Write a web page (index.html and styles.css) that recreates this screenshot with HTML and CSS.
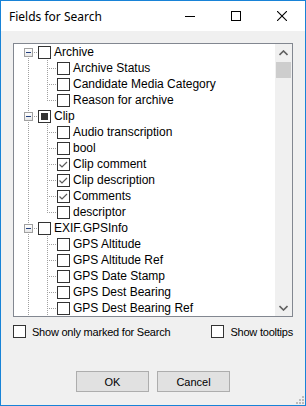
FILE: index.html
```html
<!DOCTYPE html>
<html>
	<head>
		<meta charset="utf-8">
        <title>Fields for Search</title>
        <link rel="stylesheet" href="styles.css">
	</head>
	<body>
    <div class="window">
        <div class="titlebar">
            <span class="title">Fields for Search</span>
            <span class="capbtn"><svg width="10" height="10"><rect x="0" y="5" width="10" height="1" fill="#000"/></svg></span>
            <span class="capbtn"><svg width="10" height="10"><rect x="0.5" y="0.5" width="9" height="9" fill="none" stroke="#000"/></svg></span>
            <span class="capbtn"><svg width="10" height="10"><path d="M0 0 L10 10 M10 0 L0 10" stroke="#000" stroke-width="1.1"/></svg></span>
        </div>

        <div class="client">
            <div class="treebox">
                <div class="tree">
                    <div class="row"><span class="node root first"><i class="exp"></i></span><span class="dash"></span><span class="cb"></span><span class="lbl">Archive</span></div>
                    <div class="row"><span class="guide"></span><span class="node"></span><span class="dash"></span><span class="cb"></span><span class="lbl">Archive Status</span></div>
                    <div class="row"><span class="guide"></span><span class="node"></span><span class="dash"></span><span class="cb"></span><span class="lbl">Candidate Media Category</span></div>
                    <div class="row"><span class="guide"></span><span class="node last"></span><span class="dash"></span><span class="cb"></span><span class="lbl">Reason for archive</span></div>

                    <div class="row"><span class="node root"><i class="exp"></i></span><span class="dash"></span><span class="cb part"></span><span class="lbl">Clip</span></div>
                    <div class="row"><span class="guide"></span><span class="node"></span><span class="dash"></span><span class="cb"></span><span class="lbl">Audio transcription</span></div>
                    <div class="row"><span class="guide"></span><span class="node"></span><span class="dash"></span><span class="cb"></span><span class="lbl">bool</span></div>
                    <div class="row"><span class="guide"></span><span class="node"></span><span class="dash"></span><span class="cb on"><svg width="11" height="11"><path d="M1.5 5.5 L4 8 L9 3" fill="none" stroke="#5a5a5a" stroke-width="1.2"/></svg></span><span class="lbl">Clip comment</span></div>
                    <div class="row"><span class="guide"></span><span class="node"></span><span class="dash"></span><span class="cb on"><svg width="11" height="11"><path d="M1.5 5.5 L4 8 L9 3" fill="none" stroke="#5a5a5a" stroke-width="1.2"/></svg></span><span class="lbl">Clip description</span></div>
                    <div class="row"><span class="guide"></span><span class="node"></span><span class="dash"></span><span class="cb on"><svg width="11" height="11"><path d="M1.5 5.5 L4 8 L9 3" fill="none" stroke="#5a5a5a" stroke-width="1.2"/></svg></span><span class="lbl">Comments</span></div>
                    <div class="row"><span class="guide"></span><span class="node last"></span><span class="dash"></span><span class="cb"></span><span class="lbl">descriptor</span></div>

                    <div class="row"><span class="node root"><i class="exp"></i></span><span class="dash"></span><span class="cb"></span><span class="lbl">EXIF.GPSInfo</span></div>
                    <div class="row"><span class="guide"></span><span class="node"></span><span class="dash"></span><span class="cb"></span><span class="lbl">GPS Altitude</span></div>
                    <div class="row"><span class="guide"></span><span class="node"></span><span class="dash"></span><span class="cb"></span><span class="lbl">GPS Altitude Ref</span></div>
                    <div class="row"><span class="guide"></span><span class="node"></span><span class="dash"></span><span class="cb"></span><span class="lbl">GPS Date Stamp</span></div>
                    <div class="row"><span class="guide"></span><span class="node"></span><span class="dash"></span><span class="cb"></span><span class="lbl">GPS Dest Bearing</span></div>
                    <div class="row"><span class="guide"></span><span class="node"></span><span class="dash"></span><span class="cb"></span><span class="lbl">GPS Dest Bearing Ref</span></div>
                </div>
                <div class="vscroll">
                    <span class="arrow"><svg width="9" height="6"><path d="M0.5 5 L4.5 1 L8.5 5" fill="none" stroke="#606060" stroke-width="1.6"/></svg></span>
                    <span class="thumb"></span>
                    <span class="track"></span>
                    <span class="arrow"><svg width="9" height="6"><path d="M0.5 1 L4.5 5 L8.5 1" fill="none" stroke="#606060" stroke-width="1.6"/></svg></span>
                </div>
            </div>

            <div class="opts">
                <label class="opt"><span class="cb"></span>Show only marked for Search</label>
                <label class="opt"><span class="cb"></span>Show tooltips</label>
            </div>

            <div class="buttons">
                <span class="button">OK</span>
                <span class="button">Cancel</span>
            </div>

            <svg class="grip" width="10" height="10">
                <rect x="7" y="1" width="2" height="2" fill="#bcbcbc"/>
                <rect x="4" y="4" width="2" height="2" fill="#bcbcbc"/>
                <rect x="7" y="4" width="2" height="2" fill="#bcbcbc"/>
                <rect x="1" y="7" width="2" height="2" fill="#bcbcbc"/>
                <rect x="4" y="7" width="2" height="2" fill="#bcbcbc"/>
                <rect x="7" y="7" width="2" height="2" fill="#bcbcbc"/>
            </svg>
        </div>
    </div>
	</body>
</html>
```

FILE: styles.css
```css
body{
    margin: 0;
}
.window{
    width: 306px;
    height: 406px;
    box-sizing: border-box;
    border: 1px solid #1883d7;
    display: flex;
    flex-direction: column;
    font-family: "Liberation Sans", Arial, sans-serif;
    font-size: 11px;
    color: #000;
}
.titlebar{
    height: 30px;
    background: #fff;
    display: flex;
    align-items: center;
}
.title{
    flex: 1;
    padding-left: 8px;
    font-family: "Noto Sans", "Liberation Sans", sans-serif;
    font-size: 12px;
}
.capbtn{
    width: 46px;
    height: 30px;
    display: flex;
    align-items: center;
    justify-content: center;
}
.client{
    flex: 1;
    background: #f0f0f0;
    padding: 12px 12px 0 12px;
    position: relative;
}
.treebox{
    width: 280px;
    height: 274px;
    box-sizing: border-box;
    border: 1px solid #828790;
    background: #fff;
    display: flex;
}
.tree{
    flex: 1;
    overflow: hidden;
    font-size: 12px;
}
.row{
    height: 16px;
    display: flex;
    white-space: nowrap;
}
.guide, .node{
    width: 19px;
    height: 16px;
    flex: none;
    display: flex;
    background-repeat: no-repeat;
}
/* dotted tree lines */
.guide{
    background-image: repeating-linear-gradient(to bottom, #a0a0a0 0 1px, transparent 1px 2px);
    background-size: 1px 16px;
    background-position: 14px 0;
}
.node{
    background-image:
        repeating-linear-gradient(to bottom, #a0a0a0 0 1px, transparent 1px 2px),
        repeating-linear-gradient(to right, #a0a0a0 0 1px, transparent 1px 2px);
    background-size: 1px 16px, 5px 1px;
    background-position: 14px 0, 14px 8px;
}
.node.last{
    background-size: 1px 8px, 5px 1px;
}
.node.root.first{
    background-size: 1px 8px, 5px 1px;
    background-position: 14px 8px, 14px 8px;
}
.dash{
    width: 5px;
    height: 16px;
    flex: none;
    background-image: repeating-linear-gradient(to right, #a0a0a0 0 1px, transparent 1px 2px);
    background-size: 5px 1px;
    background-position: 1px 8px;
    background-repeat: no-repeat;
}
.exp{
    width: 9px;
    height: 9px;
    box-sizing: border-box;
    margin: 4px 0 0 10px;
    border: 1px solid #a0a0a0;
    background: linear-gradient(#fff, #e8e8e8);
    display: flex;
    align-items: center;
    justify-content: center;
}
.exp::after{
    content: "";
    width: 5px;
    height: 1px;
    background: #23407f;
}
.cb{
    width: 13px;
    height: 13px;
    box-sizing: border-box;
    flex: none;
    border: 1px solid #333;
    background: #fff;
    display: flex;
    align-items: center;
    justify-content: center;
}
.row .cb{
    margin-top: 2px;
}
.cb.part::after{
    content: "";
    width: 7px;
    height: 7px;
    background: #333;
}
.lbl{
    margin-left: 3px;
    line-height: 17px;
}
.vscroll{
    width: 17px;
    flex: none;
    background: #f0f0f0;
    display: flex;
    flex-direction: column;
}
.arrow{
    height: 17px;
    display: flex;
    align-items: center;
    justify-content: center;
}
.thumb{
    height: 16px;
    margin: 1px 1px 0 1px;
    background: #cdcdcd;
}
.track{
    flex: 1;
}
.opts{
    margin-top: 8px;
    width: 280px;
    display: flex;
    justify-content: space-between;
}
.opt{
    display: flex;
    align-items: center;
    height: 13px;
    letter-spacing: -0.22px;
}
.opt .cb{
    margin-right: 6px;
}
.buttons{
    margin-top: 33px;
    display: flex;
    justify-content: center;
    gap: 8px;
}
.button{
    width: 73px;
    height: 21px;
    box-sizing: border-box;
    border: 1px solid #adadad;
    background: #e1e1e1;
    display: flex;
    align-items: center;
    justify-content: center;
}
.grip{
    position: absolute;
    right: 0;
    bottom: 0;
}
```
